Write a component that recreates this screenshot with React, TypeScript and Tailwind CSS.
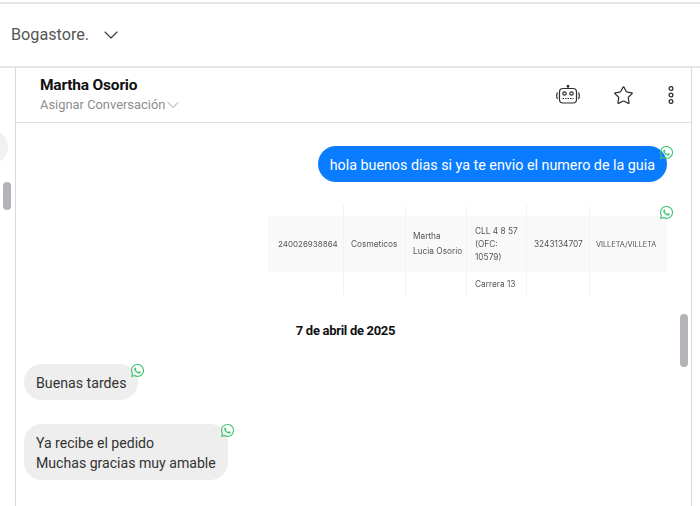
import { ChevronDown, Star } from "lucide-react";
import { FaWhatsapp } from "react-icons/fa";

const cellBorder = "border-r border-[#f3f3f3]";

const WhatsappBadge = ({ className }: { className: string }) => (
  <FaWhatsapp className={`absolute h-[15px] w-[15px] text-[#3fc56f] ${className}`} />
);

const RobotIcon = () => (
  <svg width="24" height="20" viewBox="0 0 24 20" fill="none" stroke="#2f2f2f" strokeWidth="1.2">
    <rect x="3.5" y="3.5" width="17" height="14.5" rx="3.5" />
    <path d="M12 3.5V1.2" />
    <circle cx="12" cy="1" r="0.8" fill="#2f2f2f" />
    <circle cx="8.5" cy="8.5" r="1.7" />
    <circle cx="15.5" cy="8.5" r="1.7" />
    <path d="M6.5 13.5h11" strokeDasharray="1.5 1" />
    <path d="M1.5 7.5c-1 2-1 4.500 0 6.500M22.500 7.500c1 2 1 4.500 0 6.500" />
  </svg>
);

const DotsIcon = () => (
  <svg width="6" height="18" viewBox="0 0 6 18" fill="none" stroke="#2f2f2f" strokeWidth="1.3">
    <circle cx="3" cy="2.500" r="1.900" />
    <circle cx="3" cy="9" r="1.900" />
    <circle cx="3" cy="15.500" r="1.900" />
  </svg>
);

const GuideTable = () => (
  <div className="flex h-[90px] w-[399px] flex-col font-['Inter',sans-serif] text-[8.300px] leading-[15px] text-[#555] blur-[0.2px]">
    <div className="flex h-[11px]">
      <div className={`w-[76px] ${cellBorder}`} />
      <div className={`w-[62px] ${cellBorder}`} />
      <div className={`w-[61px] ${cellBorder}`} />
      <div className={`w-[60px] ${cellBorder}`} />
      <div className={`w-[63px] ${cellBorder}`} />
      <div />
    </div>
    <div className="flex h-[56px] items-center bg-[#f9f9f9]">
      <div className={`flex h-full w-[76px] items-center pl-[10px] text-[8px] ${cellBorder}`}>240026938864</div>
      <div className={`flex h-full w-[62px] items-center pl-[7px] ${cellBorder}`}>Cosmeticos</div>
      <div className={`flex h-full w-[61px] items-center pl-[7px] ${cellBorder}`}>
        <span>Martha<br />Lucia Osorio</span>
      </div>
      <div className={`flex h-full w-[60px] items-center pl-[8px] leading-[13px] ${cellBorder}`}>
        <span>CLL 4 8 57<br />(OFC:<br />10579)</span>
      </div>
      <div className={`flex h-full w-[63px] items-center pl-[7px] ${cellBorder}`}>3243134707</div>
      <div className="pl-[6px] text-[7.300px]">VILLETA/VILLETA</div>
    </div>
    <div className="flex h-[23px]">
      <div className={`w-[76px] ${cellBorder}`} />
      <div className={`w-[62px] ${cellBorder}`} />
      <div className={`w-[61px] ${cellBorder}`} />
      <div className={`flex w-[60px] items-center pt-[2px] pl-[8px] ${cellBorder}`}>Carrera 13</div>
      <div className={`w-[63px] ${cellBorder}`} />
      <div />
    </div>
  </div>
);

export default function App() {
  return (
    <div className="relative flex h-[506px] w-[700px] flex-col overflow-hidden bg-white pt-[2px] font-['Roboto',sans-serif]">
      <header className="flex h-[66px] shrink-0 items-center border-y-2 border-[#e6e6e6] pl-[11px]">
        <span className="text-[16.200px] text-[#555]">Bogastore.</span>
        <ChevronDown className="ml-[10px] h-[24px] w-[24px] text-[#333]" strokeWidth={1.1} />
      </header>

      <div className="flex min-h-0 flex-1">
        {/* conversation list, cut off at the left */}
        <div className="relative w-[15px] shrink-0">
          <div className="absolute top-[62px] left-[-26px] h-[34px] w-[34px] rounded-full bg-[#f1f1f1]" />
          <div className="absolute top-[114px] left-[3px] h-[28px] w-[8px] rounded-full bg-[#b3b3b8]" />
        </div>

        <main className="relative mr-[8px] flex min-w-0 flex-1 flex-col border-x border-[#d9d9d9]">
          <div className="flex h-[55px] shrink-0 items-center justify-between border-b border-[#dedede] pr-[17px] pl-[24px]">
            <div className="flex flex-col">
              <span className="text-[15.500px] leading-[20px] font-bold text-[#111] [letter-spacing:-0.2px]">Martha Osorio</span>
              <span className="flex items-center text-[12.900px] leading-[18px] text-[#8d8d8d]">
                Asignar Conversación
                <ChevronDown className="ml-[-2px] h-[20px] w-[20px]" strokeWidth={1} />
              </span>
            </div>
            <div className="flex items-center">
              <RobotIcon />
              <Star className="ml-[33px] h-[21px] w-[21px] text-[#2f2f2f]" strokeWidth={1.4} />
              <div className="ml-[34px]">
                <DotsIcon />
              </div>
            </div>
          </div>

          <div className="flex flex-1 flex-col pt-[23px] pr-[24px] pl-[8px]">
            <div className="relative self-end rounded-[18px] bg-[#0a7cff] px-[12px] pt-[8.5px] pb-[7.5px] text-[14.300px] leading-[20px] text-white">
              hola buenos dias si ya te envio el numero de la guia
              <WhatsappBadge className="top-[-1px] right-[-7px]" />
            </div>

            <div className="relative mt-[23px] self-end">
              <GuideTable />
              <WhatsappBadge className="top-0 right-[-7px]" />
            </div>

            <div className="mt-[27px] text-center text-[13px] leading-[18px] font-bold text-[#111] [letter-spacing:-0.3px]">
              7 de abril de 2025
            </div>

            <div className="relative mt-[24px] self-start rounded-[18px] bg-[#eeeeee] px-[12px] pt-[8.5px] pb-[7.5px] text-[14.200px] leading-[20px] text-[#333]">
              Buenas tardes
              <WhatsappBadge className="top-[-1px] right-[-7px]" />
            </div>

            <div className="relative mt-[24px] self-start rounded-[18px] bg-[#eeeeee] px-[12px] pt-[8.5px] pb-[7.5px] text-[14.100px] leading-[20px] text-[#333]">
              Ya recibe el pedido
              <br />
              Muchas gracias muy amable
              <WhatsappBadge className="top-[-1px] right-[-7px]" />
            </div>
          </div>

          <div className="absolute top-[246px] right-[3px] h-[53px] w-[8px] rounded-full bg-[#b3b3b8]" />
        </main>
      </div>
    </div>
  );
}
